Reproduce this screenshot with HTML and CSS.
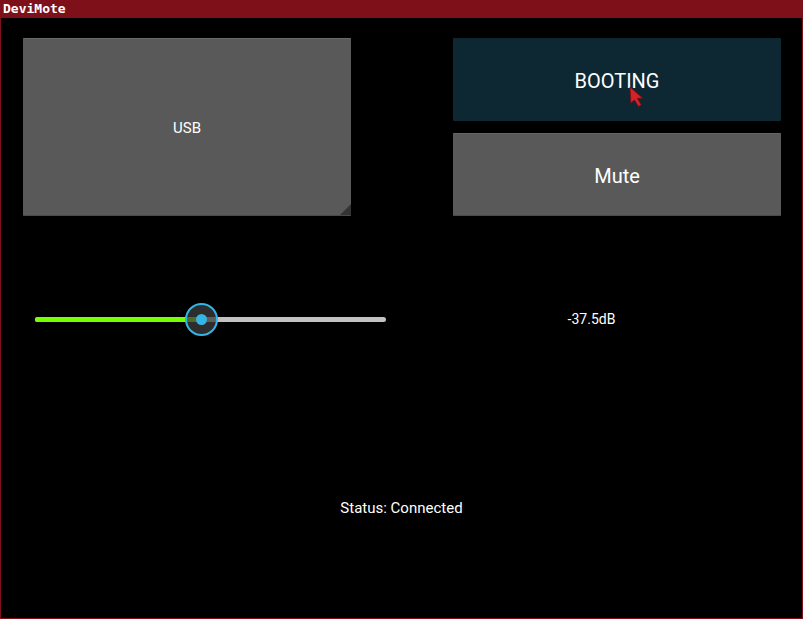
FILE: index.html
```html
<!DOCTYPE html>
<html>
<head>
<meta charset="utf-8">
<link rel="stylesheet" href="styles.css">
</head>
<body>
<div class="window">
  <div class="titlebar">DeviMote</div>
  <div class="content">
    <div class="top">
      <div class="btn usb">USB<span class="corner"></span></div>
      <div class="col">
        <div class="btn booting">BOOTING</div>
        <div class="btn mute">Mute</div>
      </div>
    </div>
    <div class="slider-row">
      <div class="slider">
        <div class="track">
          <div class="fill" style="width:165px"></div>
          <div class="thumb" style="left:150px"><span class="dot"></span></div>
        </div>
      </div>
      <div class="level">-37.5dB</div>
    </div>
    <div class="status">Status: Connected</div>
  </div>
  <svg class="cursor" width="16" height="22" viewBox="0 0 16 22"><path d="M1 1 L1.8 17 L5.5 14 L9.5 20.5 L12.3 18.8 L8.3 12.4 L13.5 12 Z" fill="#d2222a" stroke="#7a0c10" stroke-width="0.8"/></svg>
</div>
</body>
</html>
```
FILE: styles.css
```css
html, body {
  margin: 0;
  padding: 0;
  background: #000;
}
.window {
  position: relative;
  width: 803px;
  height: 619px;
  box-sizing: border-box;
  border: 1px solid #7d1018;
  border-top: none;
  display: flex;
  flex-direction: column;
  overflow: hidden;
}
.titlebar {
  height: 18px;
  margin: 0 -1px;
  background: #7d1018;
  color: #fff;
  font-family: "DejaVu Sans Mono", monospace;
  font-weight: bold;
  font-size: 13px;
  line-height: 17px;
  padding-left: 3px;
}
.content {
  flex: 1;
  display: flex;
  flex-direction: column;
  padding: 20px 21px 0 22px;
  font-family: Roboto, sans-serif;
  color: #fff;
}
.top {
  display: flex;
  gap: 102px;
  height: 178px;
}
.col {
  display: flex;
  flex-direction: column;
  gap: 12px;
  width: 328px;
}
.btn {
  position: relative;
  display: flex;
  align-items: center;
  justify-content: center;
  background: #595959;
  box-sizing: border-box;
  border-radius: 1px;
}
.usb {
  width: 328px;
  height: 178px;
  font-size: 15px;
  padding-top: 2px;
  border-top: 1px solid #6a6a6a;
  border-bottom: 1px solid #4a4a4a;
}
.corner {
  position: absolute;
  right: 0;
  bottom: 0;
  width: 0;
  height: 0;
  border-left: 11px solid transparent;
  border-bottom: 11px solid #333;
}
.booting {
  height: 83px;
  background: #0e2833;
  font-size: 20px;
  padding-top: 3px;
}
.mute {
  height: 83px;
  font-size: 20px;
  padding-top: 3px;
  border-top: 1px solid #646464;
  border-bottom: 1px solid #4a4a4a;
}
.slider-row {
  display: flex;
  align-items: center;
  height: 34px;
  margin-top: 86px;
}
.slider {
  width: 375px;
  box-sizing: border-box;
  padding-left: 12px;
}
.track {
  position: relative;
  width: 351px;
  height: 5px;
  border-radius: 3px;
  background: #c2c2c2;
}
.fill {
  height: 5px;
  border-radius: 3px 0 0 3px;
  background: #76ff03;
}
.thumb {
  position: absolute;
  top: -14px;
  width: 29px;
  height: 29px;
  border: 2px solid #33b5e5;
  border-radius: 50%;
  background: rgba(60, 60, 60, 0.75);
  display: flex;
  align-items: center;
  justify-content: center;
}
.dot {
  width: 11px;
  height: 11px;
  border-radius: 50%;
  background: #33b5e5;
}
.level {
  flex: 1;
  text-align: center;
  font-size: 14px;
  padding-left: 4px;
}
.status {
  margin-top: 164px;
  text-align: center;
  font-size: 15px;
  line-height: 17px;
  margin-left: -22px;
  margin-right: -21px;
}
.cursor {
  position: absolute;
  left: 628px;
  top: 86px;
}
```
